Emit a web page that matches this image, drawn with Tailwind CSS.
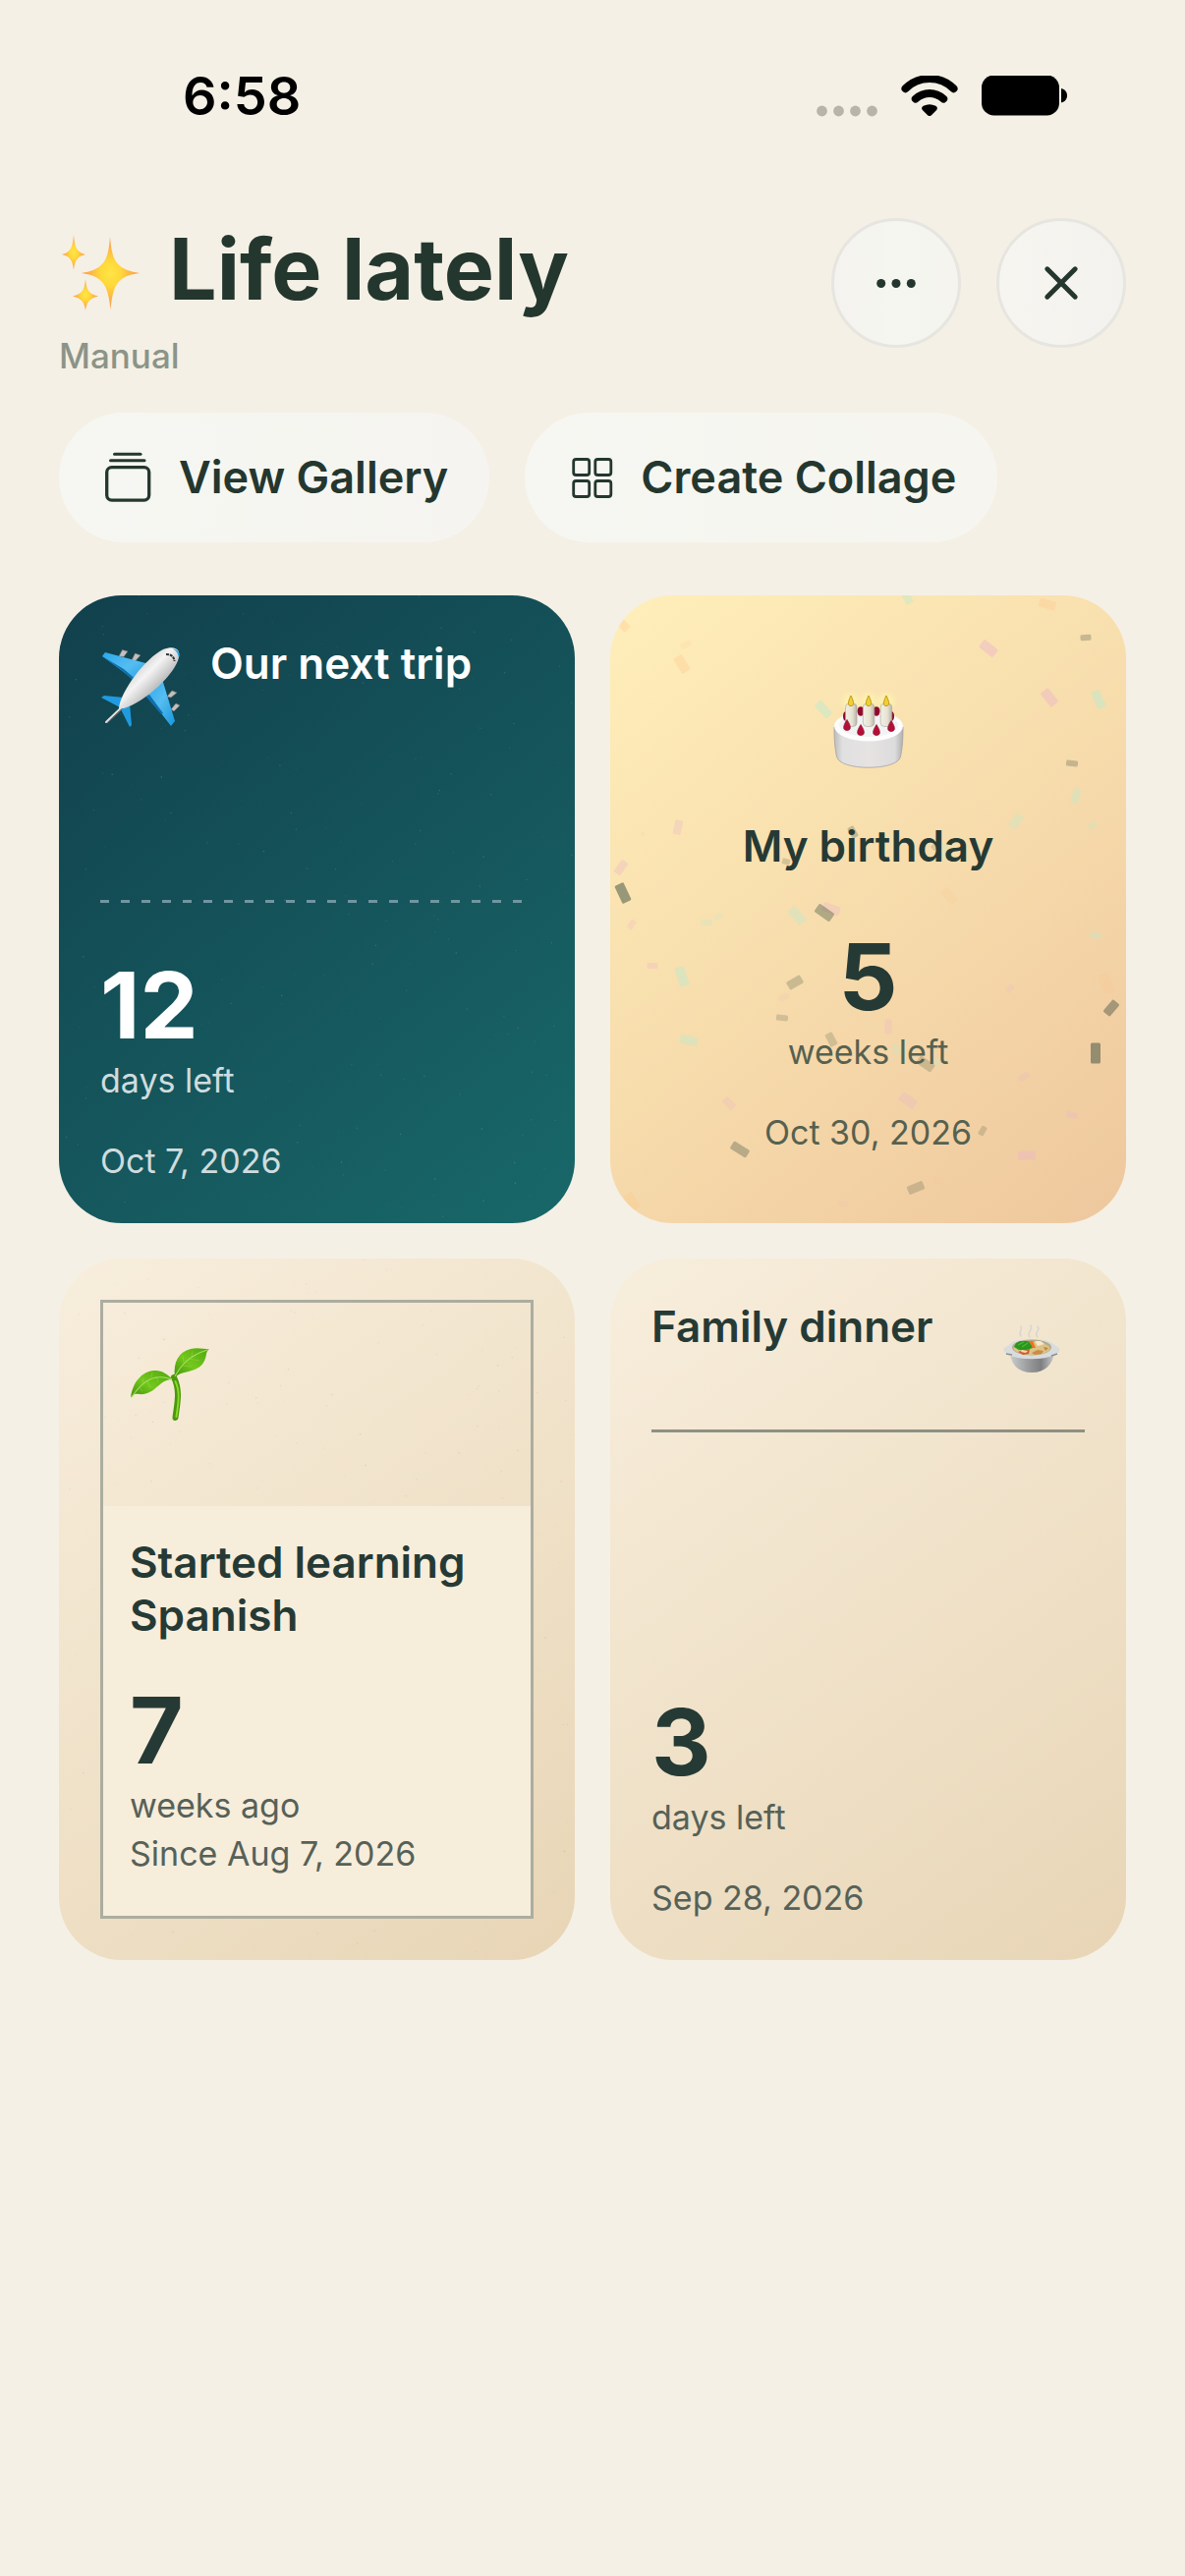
<!DOCTYPE html>
<html lang="en">
<head>
    <meta charset="UTF-8">
    <meta name="viewport" content="width=device-width, initial-scale=1.0">
    <title>Life lately</title>
    <script src="https://cdn.jsdelivr.net/npm/@tailwindcss/browser@4"></script>
</head>
<body class="min-h-screen bg-[#f5f0e5] font-['Inter',sans-serif] text-[#263a35]">

    <!-- Status bar -->
    <div class="flex items-center justify-between pt-[66px] pl-[186px] pr-[120px] text-black">
        <span class="text-[54px] leading-[64px] font-semibold">6:58</span>
        <div class="flex items-center">
            <svg class="w-[62px] h-[42px] mr-6" viewBox="0 0 62 42" fill="#b8b4ab">
                <circle cx="5.5" cy="36" r="5.4"/><circle cx="22.5" cy="36" r="5.4"/><circle cx="39.5" cy="36" r="5.4"/><circle cx="56.5" cy="36" r="5.4"/>
            </svg>
            <svg class="w-[58px] h-[42px] mr-6" viewBox="0 1 58 42" fill="none" stroke="#000" stroke-width="8" stroke-linecap="round">
                <path d="M4.500 14.200C18 .7 40 .7 53.500 14.200"/>
                <path d="M14.800 24.600C23 17 35 17 43.200 24.600"/>
                <path d="M24 34.200C27 32.700 31 32.700 34 34.200L29 39.200Z" fill="#000" stroke-width="5.500" stroke-linejoin="round"/>
            </svg>
            <svg class="w-[87px] h-[42px]" viewBox="0 1 87 42">
                <rect x="0" y="0.500" width="79" height="41" rx="12.500"/>
                <path d="M81 14c8 1.500 8 13 0 14.500z"/>
            </svg>
        </div>
    </div>

    <main class="px-[60px] pt-[92px]">
        <header class="flex items-start justify-between">
            <div>
                <h1 class="flex items-center gap-7 text-[86px] leading-[104px] font-bold text-[#24372f]">
                    <svg class="w-[84px] h-[84px]" viewBox="0 0 84 84" aria-hidden="true">
                        <defs>
                            <radialGradient id="spark">
                                <stop offset="0" stop-color="#ffe545"/>
                                <stop offset=".35" stop-color="#ffd83a"/>
                                <stop offset=".7" stop-color="#fdb347"/>
                                <stop offset="1" stop-color="#f79a52"/>
                            </radialGradient>
                        </defs>
                        <g fill="url(#spark)">
                            <path d="M52 9C54 32 57 42 82 46C58 49 55 60 52.500 83C50 60 46 49 23 46C47 42 50 32 52 9Z"/>
                            <path d="M15 7C16 19 18 25 27 27C18 29 16 34 15 43C14 34 12 29 3 27C12 25 14 19 15 7Z"/>
                            <path d="M27 52C28 63 30 67 40 69.500C30 72 28 77 27 84C26 77 24 72 14 69.500C24 67 26 63 27 52Z"/>
                        </g>
                    </svg>
                    Life lately
                </h1>
                <p class="mt-[14px] text-[35px] leading-[44px] font-medium text-[#8b9488]">Manual</p>
            </div>
            <div class="flex gap-9">
                <button type="button" aria-label="More options" class="flex size-[132px] items-center justify-center rounded-full border-3 border-[#e6e5e0] bg-linear-to-r from-[#f5f3ef] via-[#f5f6f0] to-[#f5f4ef]">
                    <svg class="w-10 h-9" viewBox="0 0 40 36" fill="#24372f"><circle cx="4.700" cy="18.500" r="4.500"/><circle cx="20" cy="18.500" r="4.500"/><circle cx="35.300" cy="18.500" r="4.500"/></svg>
                </button>
                <button type="button" aria-label="Close" class="flex size-[132px] items-center justify-center rounded-full border-3 border-[#e6e5e0] bg-linear-to-r from-[#f6f5f0] to-[#f4f2ee]">
                    <svg class="size-9" viewBox="0 0 36 36" stroke="#24372f" stroke-width="5" stroke-linecap="round"><path d="M3.800 3.800L32.200 32.200M32.200 3.800L3.800 32.200"/></svg>
                </button>
            </div>
        </header>

        <div class="mt-9 flex gap-9 text-[45px] leading-[54px] font-semibold text-[#24372f]">
            <button type="button" class="flex h-[132px] items-center gap-6 rounded-full bg-linear-to-r from-[#f6f7f2] to-[#f5f4f0] px-[42px]">
                <svg class="size-14" viewBox="0 0 56 56" fill="none" stroke="#24372f" stroke-width="3.300" aria-hidden="true">
                    <rect x="6.700" y="17.600" width="43" height="33.500" rx="5"/>
                    <path d="M14.500 4.200h26.500" stroke-width="3" stroke-linecap="round"/>
                    <path d="M10.500 10.700h34.500" stroke-width="3" stroke-linecap="round"/>
                </svg>
                View Gallery
            </button>
            <button type="button" class="flex h-[132px] items-center gap-5 rounded-full bg-linear-to-r from-[#f6f7f2] to-[#f6f5f0] px-[42px]">
                <svg class="size-14" viewBox="0 0 56 56" fill="none" stroke="#24372f" stroke-width="2.800" aria-hidden="true">
                    <rect x="7.700" y="9.500" width="16" height="16" rx="2.500"/>
                    <rect x="29.800" y="9.500" width="16" height="16" rx="2.500"/>
                    <rect x="7.700" y="31.500" width="16" height="16" rx="2.500"/>
                    <rect x="29.800" y="31.500" width="16" height="16" rx="2.500"/>
                </svg>
                Create Collage
            </button>
        </div>

        <section class="mt-[54px] grid grid-cols-2 gap-9">

            <!-- Trip -->
            <article class="relative flex min-h-[639px] flex-col overflow-hidden rounded-[64px] bg-linear-141 from-[#11404c] to-[#186869] p-[42px] text-white">
                <svg data-specks="#8fd0cc" class="absolute inset-0 size-full" viewBox="0 0 525 714" preserveAspectRatio="xMidYMid slice" aria-hidden="true"></svg>
                <div class="relative flex items-start gap-7">
                    <svg class="w-[84px] h-[104px] shrink-0" viewBox="0 0 84 104" aria-hidden="true">
                        <defs>
                            <linearGradient id="hull" x1="0" y1="0" x2="1" y2="1">
                                <stop offset=".2" stop-color="#bdbdbd"/>
                                <stop offset=".45" stop-color="#f4f4f4"/>
                                <stop offset=".62" stop-color="#c4c4c4"/>
                                <stop offset=".85" stop-color="#8c8c8c"/>
                            </linearGradient>
                            <linearGradient id="wing" x1="0" y1="0" x2="1" y2="1">
                                <stop offset="0" stop-color="#29a8ea"/>
                                <stop offset=".5" stop-color="#56bdf1"/>
                                <stop offset="1" stop-color="#1796dd"/>
                            </linearGradient>
                        </defs>
                        <g fill="#c4c0bd" stroke="#77716e" stroke-width=".6">
                            <path d="M19 20L22.500 13.500L28 15L24 20.500Z"/><path d="M32 24L35.500 17L41 19L36 24.500Z"/>
                            <path d="M68 61L73 55L78 57L72 62Z"/><path d="M72 74L77 68L81 70L75 76Z"/>
                        </g>
                        <path d="M2 20L5 16L50 28L38 48L24 36Z" fill="url(#wing)"/>
                        <path d="M2 20L24 36L37 48L39 46L24 33Z" fill="#0e6fae"/>
                        <path d="M63 43L76 86L72 91L62 78L46 60Z" fill="url(#wing)"/>
                        <path d="M46 60L62 79L64 78L50 59Z" fill="#0e6fae"/>
                        <path d="M1 62L4 60L24 62L20 72Z" fill="#209be0"/>
                        <path d="M21 74L30 69L32 90L30 92Z" fill="#209be0"/>
                        <path d="M19 73C21 55 46 22 64 13C75 9 82 12 80 21C77 37 47 66 24 73Z" fill="url(#hull)"/>
                        <path d="M74 12.500C80 13 81.500 17 80 22C79 17 78 15 74 12.500Z" fill="#2ea5e2"/>
                        <path d="M67 18C72 18 75 20 75.500 25" fill="none" stroke="#333" stroke-width="2" stroke-dasharray="3 .8"/>
                        <path d="M29 65L7 86L6 87" fill="none" stroke="#e2e0df" stroke-width="2" stroke-linecap="round"/>
                        <path d="M21 75L7 88" fill="none" stroke="#77716e" stroke-width="1"/>
                    </svg>
                    <h2 class="text-[44px] leading-[54px] font-semibold">Our next trip</h2>
                </div>
                <div class="relative mt-auto mb-12 h-[3px] bg-[repeating-linear-gradient(90deg,#7196a0_0_9px,transparent_9px_21px)]"></div>
                <p class="relative text-[94px] leading-[112px] font-bold">12</p>
                <p class="relative text-[34px] leading-[42px] text-[#cfdcde]">days left</p>
                <p class="relative mt-10 text-[34px] leading-[42px] text-[#cfdcde]">Oct 7, 2026</p>
            </article>

            <!-- Birthday -->
            <article class="relative flex min-h-[639px] flex-col items-center justify-center overflow-hidden rounded-[64px] bg-linear-141 from-[#ffefba] via-[#f7dcac] to-[#eec79d] p-[42px] text-center">
                <svg id="confetti" class="absolute inset-0 size-full" viewBox="0 0 525 639" preserveAspectRatio="xMidYMid slice" aria-hidden="true"></svg>
                <svg class="relative w-[96px] h-[132px]" viewBox="0 0 96 132" aria-hidden="true">
                    <defs>
                        <linearGradient id="cake" x1="0" x2="1">
                            <stop offset="0" stop-color="#bdbdbd"/>
                            <stop offset=".12" stop-color="#e0e0e0"/>
                            <stop offset=".5" stop-color="#e6e3e2"/>
                            <stop offset=".88" stop-color="#dcdcdc"/>
                            <stop offset="1" stop-color="#b0b0b0"/>
                        </linearGradient>
                        <linearGradient id="candle" x1="0" x2="1">
                            <stop offset="0" stop-color="#f3f0e4"/>
                            <stop offset=".6" stop-color="#e6e2d3"/>
                            <stop offset="1" stop-color="#b9b5a6"/>
                        </linearGradient>
                        <radialGradient id="glow">
                            <stop offset="0" stop-color="#fff7b0"/>
                            <stop offset="1" stop-color="#fff7b0" stop-opacity="0"/>
                        </radialGradient>
                    </defs>
                    <g fill="url(#glow)"><circle cx="30" cy="36" r="12"/><circle cx="48" cy="36" r="12"/><circle cx="66" cy="36" r="12"/></g>
                    <path d="M13 62C13 78 14 84 15.500 92C18 107 78 107 80.500 92C82 84 83 78 83 62Z" fill="url(#cake)" stroke="#a3a3a3" stroke-width=".8"/>
                    <ellipse cx="48" cy="61" rx="35" ry="15.500" fill="#fdfdfd"/>
                    <ellipse cx="48" cy="60" rx="30" ry="12" fill="#f1f3f4"/>
                    <g fill="#8f0a2c">
                        <ellipse cx="25" cy="51" rx="3" ry="4.800"/><ellipse cx="40" cy="46" rx="3.500" ry="4.800"/><ellipse cx="56" cy="46" rx="3.500" ry="4.800"/><ellipse cx="71" cy="51" rx="3" ry="4.800"/>
                    </g>
                    <g fill="url(#candle)" stroke="#a9a596" stroke-width=".6">
                        <rect x="24.500" y="38" width="11.500" height="23.500" rx="4"/>
                        <rect x="42.300" y="38" width="11.500" height="23.500" rx="4"/>
                        <rect x="60.200" y="38" width="11.500" height="23.500" rx="4"/>
                    </g>
                    <g fill="#f0cf34" stroke="#c79a1c" stroke-width="1">
                        <path d="M30 30C26 38 27 40.500 30 40.500S34 38 30 30Z"/>
                        <path d="M48 30C44 38 45 40.500 48 40.500S52 38 48 30Z"/>
                        <path d="M66 30C62 38 63 40.500 66 40.500S70 38 66 30Z"/>
                    </g>
                    <g fill="#b50f37" stroke="#7f0926" stroke-width=".6">
                        <path d="M26 54.500C21 62 22 65.500 26 65.500S31 62 26 54.500Z"/>
                        <path d="M40 59.500C35 67 36 70.500 40 70.500S45 67 40 59.500Z"/>
                        <path d="M56 59.500C51 67 52 70.500 56 70.500S61 67 56 59.500Z"/>
                        <path d="M71 55.500C66 63 67 66.500 71 66.500S76 63 71 55.500Z"/>
                    </g>
                </svg>
                <h2 class="relative mt-6 text-[44px] leading-[54px] font-semibold">My birthday</h2>
                <p class="relative mt-[50px] text-[94px] leading-[112px] font-bold">5</p>
                <p class="relative text-[34px] leading-[42px] text-[#56614f]">weeks left</p>
                <p class="relative mt-10 text-[34px] leading-[42px] text-[#56614f]">Oct 30, 2026</p>
            </article>

            <!-- Spanish -->
            <article class="relative flex min-h-[714px] flex-col overflow-hidden rounded-[64px] bg-linear-144 from-[#f8eedd] via-[#f0e2c9] to-[#e8d5b6] p-[42px]">
                <svg data-specks="#a39c80" class="absolute inset-0 size-full" viewBox="0 0 525 714" preserveAspectRatio="xMidYMid slice" aria-hidden="true"></svg>
                <div class="relative flex flex-1 flex-col border-3 border-[#abad9f]">
                    <div class="flex-1 px-[27px] pt-[30px]">
                        <svg class="w-[84px] h-[104px]" viewBox="0 0 84 104" aria-hidden="true">
                            <defs>
                                <linearGradient id="leaf" x1="0" y1="1" x2="1" y2="0">
                                    <stop offset="0" stop-color="#3f9008"/>
                                    <stop offset=".45" stop-color="#74c81c"/>
                                    <stop offset="1" stop-color="#4fa60f"/>
                                </linearGradient>
                            </defs>
                            <path d="M45 46C52 60 48 74 46.500 87" fill="none" stroke="#4c970c" stroke-width="6" stroke-linecap="round"/>
                            <path d="M46.500 50C52 62 49 74 47.500 86" fill="none" stroke="#86d926" stroke-width="2" stroke-linecap="round"/>
                            <path d="M1 67C3 51 12 40 25 39C33 38.500 38 43 44 48C30 47 26 65 9 63C5 62 2 64 1 67Z" fill="url(#leaf)"/>
                            <path d="M46 46C44 30 50 20 62 17C69 15.500 75 17 81 17.500C77 19 79 25 75 31C68 42 54 38 46 46Z" fill="url(#leaf)"/>
                            <path d="M2 66C14 48 26 42 43 48M46 45C52 34 60 24 79 18" fill="none" stroke="#a5dd62" stroke-width="1.100"/>
                            <path d="M10 56L13 60M18 49L21 57M27 45L29 51M13 52L14 47M22 46L23 41M53 34L63 35M60 27L71 29M55 31L54 24M63 25L64 19" fill="none" stroke="#a5dd62" stroke-opacity=".4" stroke-width=".9"/>
                        </svg>
                    </div>
                    <div class="bg-[#f7eddb] px-[27px] pt-[30px] pb-[42px]">
                        <h2 class="text-[44px] leading-[54px] font-semibold">Started learning Spanish</h2>
                        <p class="mt-[34px] text-[94px] leading-[112px] font-bold">7</p>
                        <p class="text-[34px] leading-[42px] text-[#566158]">weeks ago</p>
                        <p class="mt-[7px] text-[34px] leading-[42px] text-[#566158]">Since Aug 7, 2026</p>
                    </div>
                </div>
            </article>

            <!-- Dinner -->
            <article class="flex min-h-[714px] flex-col rounded-[64px] bg-linear-144 from-[#f8eedd] via-[#f0e2c9] to-[#e8d5b6] p-[42px]">
                <div class="flex items-start justify-between border-b-3 border-[#8f9083] pb-[33px]">
                    <h2 class="text-[44px] leading-[54px] font-semibold">Family dinner</h2>
                    <svg class="w-[108px] h-[99px] shrink-0" viewBox="0 0 108 99" aria-hidden="true">
                        <defs>
                            <linearGradient id="bowl" x1="0" x2="1">
                                <stop offset="0" stop-color="#c9cccd"/>
                                <stop offset=".4" stop-color="#9a9c9d"/>
                                <stop offset=".7" stop-color="#7d7f80"/>
                                <stop offset="1" stop-color="#c8cacb"/>
                            </linearGradient>
                        </defs>
                        <path d="M43 37C40 33 45 31 43 27M52 38C48 33 56 31 53 26M60 38C55 33 64 31 60 27" fill="none" stroke="#d9d6d0" stroke-width="1.600" stroke-linecap="round"/>
                        <path d="M32 54C33 66 40 74 54 74S75 66 77 54Z" fill="url(#bowl)"/>
                        <path d="M26 52C24 48 27 49 31 46C35 38 72 38 77 46C81 48 84 49 81.500 53C80 56 76 56 72 58C62 61 46 61 36 58C31 57 27 56 26 52Z" fill="#d9dcdd"/>
                        <path d="M28 55L34 56M74 57L80 55" stroke="#8e9091" stroke-width="1.500"/>
                        <ellipse cx="54" cy="48.500" rx="20" ry="8" fill="#b3ab8c"/>
                        <ellipse cx="54" cy="49.500" rx="18.500" ry="6.500" fill="#dcc288"/>
                        <path d="M36 48L38 44L42 42L46 42L50 42L54 45L55 49L49 51L41 51Z" fill="#2a9620"/>
                        <path d="M40 46L46 43M44 48L50 44" stroke="#4db836" stroke-width="1.100"/>
                        <path d="M51 42L55 42L58 49L55 49Z" fill="#f0711f"/>
                        <path d="M57 42L63 42L67 45L60 47Z" fill="#f6e9c4"/>
                        <path d="M40 53L46 51L52 50L51 55L45 56Z" fill="#c9602b"/>
                        <path d="M44 51L50 52L48 54L43 53Z" fill="#f3dcb5"/>
                        <path d="M54 54L60 51L66 52L64 55L57 56Z" fill="#cf8b42"/>
                        <path d="M66 48L71 49L68 52Z" fill="#b98b3c"/>
                    </svg>
                </div>
                <p class="mt-auto text-[94px] leading-[112px] font-bold">3</p>
                <p class="text-[34px] leading-[42px] text-[#566158]">days left</p>
                <p class="mt-10 text-[34px] leading-[42px] text-[#566158]">Sep 28, 2026</p>
            </article>
        </section>
    </main>

    <script>
        const colors = { d: "#2f4438", p: "#ecb4cc", t: "#b8ead0", o: "#ffc488" };

        // [x, y, width, height, rotation, color, opacity]
        const confetti = [
            [14, 31, 11, 9, 45, "o", .3], [77, 50, 11, 6, -25, "o", .15], [73, 70, 18, 10, 58, "o", .3],
            [302, 2, 14, 8, 60, "t", .4], [445, 9, 17, 9, 15, "o", .3], [385, 54, 18, 10, 38, "p", .45],
            [484, 43, 11, 6, -4, "d", .25], [447, 104, 18, 10, 52, "p", .45], [497, 106, 19, 9, 65, "t", .45],
            [217, 116, 18, 9, 48, "t", .45], [470, 171, 12, 6, 7, "d", .25], [474, 204, 15, 8, -72, "t", .35],
            [413, 230, 16, 9, -55, "t", .3], [491, 234, 9, 6, -35, "t", .25], [69, 236, 15, 8, -78, "p", .3],
            [33, 243, 5, 3, 90, "o", .15], [11, 277, 15, 8, -55, "p", .35], [13, 303, 20, 10, 65, "d", .48],
            [247, 241, 12, 7, 60, "d", .25], [179, 271, 8, 6, 15, "d", .18], [331, 255, 9, 6, -45, "d", .15],
            [340, 261, 17, 10, 80, "t", .3], [345, 306, 17, 9, 50, "o", .15], [225, 319, 18, 9, 20, "p", .35],
            [218, 323, 19, 10, 35, "d", .35], [190, 326, 19, 10, 48, "t", .35], [98, 333, 12, 6, 3, "t", .25],
            [110, 327, 9, 6, -30, "t", .2], [22, 335, 10, 6, -55, "p", .25], [494, 346, 12, 6, 10, "t", .3],
            [43, 377, 11, 6, 0, "p", .3], [73, 388, 20, 10, 72, "t", .45], [188, 394, 16, 9, -30, "d", .22],
            [177, 409, 11, 6, -25, "p", .15], [175, 430, 12, 6, 5, "d", .18], [407, 400, 9, 6, -45, "p", .2],
            [505, 395, 20, 11, 70, "o", .2], [510, 420, 16, 9, -50, "d", .4], [283, 439, 15, 7, 90, "p", .25],
            [225, 452, 14, 8, 62, "d", .18], [80, 453, 18, 9, 13, "t", .4], [291, 462, 11, 7, 60, "t", .25],
            [321, 477, 18, 9, 35, "d", .2], [335, 474, 10, 8, -40, "t", .25], [494, 466, 10, 21, 0, "d", .48],
            [421, 490, 11, 6, -25, "p", .25], [121, 517, 13, 8, 45, "p", .25], [303, 514, 18, 10, 35, "p", .3],
            [470, 529, 12, 6, 15, "p", .3], [379, 545, 10, 6, -60, "d", .18], [132, 564, 19, 9, 32, "d", .3],
            [424, 570, 18, 9, 0, "p", .4], [311, 603, 17, 9, -22, "d", .2], [335, 596, 12, 8, 20, "o", .08],
            [22, 617, 18, 10, 60, "o", .25], [237, 619, 10, 6, 10, "p", .1]
        ];

        document.getElementById("confetti").innerHTML = confetti.map(([x, y, w, h, r, c, o]) =>
            `<rect x="${x - w / 2}" y="${y - h / 2}" width="${w}" height="${h}" rx="1.5" fill="${colors[c]}" fill-opacity="${o}" transform="rotate(${r} ${x} ${y})"/>`
        ).join("");

        // paper grain
        let seed = 7;
        function rand() {
            seed = (seed * 16807) % 2147483647;
            return seed / 2147483647;
        }
        document.querySelectorAll("[data-specks]").forEach(svg => {
            let dots = "";
            for (let i = 0; i < 260; i++) {
                dots += `<circle cx="${rand() * 525}" cy="${rand() * 714}" r="${0.4 + rand() * 0.4}" fill-opacity="${0.06 + rand() * 0.22}"/>`;
            }
            svg.setAttribute("fill", svg.dataset.specks);
            svg.innerHTML = dots;
        });
    </script>
</body>
</html>
